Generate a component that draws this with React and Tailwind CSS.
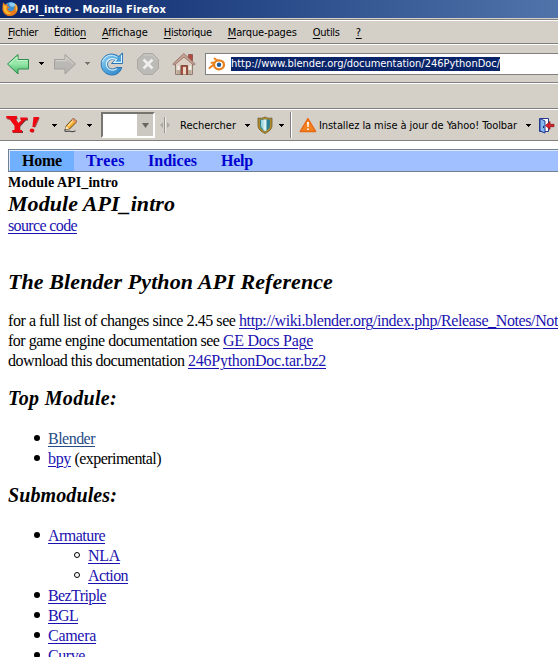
import { useLayoutEffect, useRef, useState } from 'react';

// Text spread over a fixed width by adjusting its letter spacing.
function Fit({ w, className = '', children }) {
  const ref = useRef(null);
  const [spacing, setSpacing] = useState(0);
  useLayoutEffect(() => {
    const el = ref.current;
    const natural = el.getBoundingClientRect().width;
    setSpacing((w - natural) / el.textContent.length);
  }, [w]);
  return (
    <span ref={ref} className={`inline-block whitespace-pre ${className}`} style={{ letterSpacing: spacing }}>
      {children}
    </span>
  );
}

function Link({ w, children, color = 'text-[#1a12b0]' }) {
  return (
    <a className={color}>
      <Fit w={w} className="underline decoration-1 underline-offset-2">{children}</Fit>
    </a>
  );
}

function Caret({ className = '', color = '#000' }) {
  return (
    <svg width="5" height="3" viewBox="0 0 5 3" shapeRendering="crispEdges" className={`shrink-0 ${className}`}>
      <path d="M0 0h5v1h-1v1h-1v1h-1v-1h-1v-1h-1z" fill={color} />
    </svg>
  );
}

function FirefoxIcon() {
  return (
    <svg width="16" height="16" viewBox="0 0 16 16" className="shrink-0">
      <circle cx="8.5" cy="7.3" r="6.3" fill="#3f8fd0" />
      <path d="M7 2c3-1.4 6-.2 7 2l-3 2-3-1z" fill="#8fd0f0" />
      <path d="M1 1.2 3 3.6 6 3.2 5 5l2.6 1.2-2 1.5c.4 2 2.2 3 4.2 2.3 2.6-.6 3-3 2.6-5l1 .6-.2-3C15.600 4 16.300 7 15.300 10c-1.500 4-5 5.500-8.300 5C2.500 14.400.300 11 .400 7z" fill="#e8791a" />
      <path d="M1.600 3 3 4.800l2 .4-1 2C4.500 10.500 7 12.500 10 12 6.500 14.500 2.500 12 1.600 8.500z" fill="#f8c030" />
      <path d="M13.300 2.600c2 2.400 2.300 6 .7 8.300l-.3-4z" fill="#f8cf48" />
    </svg>
  );
}

function Arrow({ forward }) {
  const id = forward ? 'arrowFwd' : 'arrowBack';
  return (
    <svg width="24" height="24" viewBox="0 0 24 24" className={`shrink-0 ${forward ? '-scale-x-100' : ''}`}>
      <defs>
        <linearGradient id={id} x1="0" y1="0" x2="0" y2="1">
          <stop offset="0" stopColor={forward ? '#c8c6c2' : '#7fda94'} />
          <stop offset=".45" stopColor={forward ? '#bbb9b5' : '#9be9ac'} />
          <stop offset="1" stopColor={forward ? '#b5b3af' : '#3fb663'} />
        </linearGradient>
      </defs>
      <path d="M1.500 12 12 2.500V7.500H22.500V17H12V22z" fill={`url(#${id})`} stroke={forward ? '#a3a19d' : '#2f8c4c'} strokeLinejoin="round" />
      <path d="M3.500 12 11 5V8.600H21.300" fill="none" stroke={forward ? '#d6d4d0' : '#c9f7d2'} strokeWidth="1" />
    </svg>
  );
}

function ReloadIcon() {
  return (
    <svg width="24" height="24" viewBox="0 0 24 24" className="shrink-0">
      <defs>
        <linearGradient id="reload" x1="0" y1="0" x2="1" y2="1">
          <stop offset="0" stopColor="#a8dcf5" />
          <stop offset=".5" stopColor="#4da5dc" />
          <stop offset="1" stopColor="#2f83c5" />
        </linearGradient>
      </defs>
      <path d="M22.500 1v10.500h-11l3.500-3.600c-3.600-1.700-7.500.6-7.500 4.300 0 4.600 5.500 6.300 8.800 3.300h5.500C20 20.800 16.500 23 12 23 6 23 1.200 18.300 1.200 12.200 1.200 3.500 11-1 18.700 4.500z" fill="url(#reload)" stroke="#2b75b5" strokeLinejoin="round" />
      <path d="M21.500 3v7.400h-7.600l2.500-2.800C10.500 5 6.200 8 6.400 12.600c.3 5.400 6.600 7 10.600 4" fill="none" stroke="#e0f4ff" strokeWidth="1.100" />
      <path d="M2.500 10c1.500-6 8.500-9 15-4.500" fill="none" stroke="#c6eafb" />
    </svg>
  );
}

function StopIcon() {
  return (
    <svg width="24" height="24" viewBox="0 0 24 24" className="shrink-0">
      <path d="M7.500 1.500h9l6 6v9l-6 6h-9l-6-6v-9z" fill="#bcbab6" stroke="#a9a7a3" strokeLinejoin="round" />
      <path d="M8 3h8l4.800 4.800" fill="none" stroke="#cfcdc9" />
      <path d="m7.500 7.500 9 9m0-9-9 9" stroke="#efeeec" strokeWidth="2.800" />
    </svg>
  );
}

function HomeIcon() {
  return (
    <svg width="24" height="24" viewBox="0 0 24 24" className="shrink-0">
      <path d="M16.500 2.500h4v6h-4z" fill="#b14a42" stroke="#8b4c45" strokeWidth=".8" />
      <path d="M3.500 11 12 3.500 20.500 11v11.500h-17z" fill="#ddd0c3" stroke="#937d70" />
      <path d="M4.500 18h15v4h-15z" fill="#bda998" />
      <path d="M9 13.500h6.500v9H9z" fill="#a84c38" stroke="#805044" />
      <path d="M11 15h3v7.500h-3z" fill="#e8d8c8" />
      <path d="M5.500 14h2v4h-2zM17 14h2v4h-2z" fill="#f5eee6" />
      <path d="M.8 12 11.800 1.500 23.200 12l-1.700 1L12 5 2.400 13z" fill="#c7a395" stroke="#8f6c62" strokeWidth=".8" strokeLinejoin="round" />
    </svg>
  );
}

function BlenderIcon() {
  return (
    <svg width="18" height="16" viewBox="0 0 18 16" className="shrink-0">
      <path d="M1.500 12 8 6.700H3.500M6.500 2.500 13 7" fill="none" stroke="#e8811c" strokeWidth="2" strokeLinecap="round" />
      <ellipse cx="11" cy="8.800" rx="5" ry="4.500" fill="#fff" stroke="#e8811c" strokeWidth="2.300" />
      <circle cx="11" cy="8.800" r="2.200" fill="#1d5898" />
    </svg>
  );
}

function YahooIcon() {
  return (
    <svg width="34" height="20" viewBox="0 0 34 20" className="shrink-0">
      <path d="M1.500 2.500H11.500V4.500H9.800L13 9.200 17 5.500H15V3.500H22V5.500H20L14.300 11.500V16H17V18H7V16H9.700V11.500L4.500 4.500H1.500z" fill="#5e4040" />
      <path d="M.3 1H11V3.500H9.300L12.300 8 16 4.700H14.300V2.500H21.500V4.700H19.300L14 10.700V15H16V17.500H6.300V15H8.500V10.700L3 3.500H.3z" fill="#ef0610" />
      <path d="M27.500 2h5.800L28.800 12h-2.400z" fill="#ef0610" />
      <ellipse cx="26" cy="15.500" rx="2.300" ry="1.900" fill="#ef0610" />
      <path d="M33.200 3 29.200 12h-1.200M28.200 16.300l-1.600 1.300" stroke="#7c3535" strokeWidth=".8" fill="none" />
    </svg>
  );
}

function PencilIcon() {
  return (
    <svg width="15" height="16" viewBox="0 0 15 16" className="shrink-0">
      <path d="M1 12v2c2 1.300 3-.5 5 .3s3 .8 5.500-.5" fill="none" stroke="#4b4b4b" strokeWidth="1.200" />
      <path d="M1.500 12.500 2.300 8.700 9.300 1.300 13 4.500 5.800 11.700z" fill="#f5ac2f" stroke="#65451b" strokeLinejoin="round" />
      <path d="m3.500 8.500 6-6.200 1 .8-6 6.400z" fill="#ffe69a" />
      <path d="m9.300 1.500 3.500 3-1.500 1.300-3.300-3z" fill="#e88d70" />
      <path d="M1.500 12.500 2.200 9.300 5 11.500z" fill="#fff3cc" />
    </svg>
  );
}

function ShieldIcon() {
  return (
    <svg width="16" height="18" viewBox="0 0 16 18" className="shrink-0">
      <path d="M1 2c3 .6 4.500.2 7-1 2.500 1.200 4 1.600 7 1v7.500c0 3.500-3 6-7 8-4-2-7-4.500-7-8z" fill="#b48a2a" stroke="#6b5a2c" strokeWidth=".8" />
      <path d="M3 3.500h10v6c0 2.500-2 4.500-5 6-3-1.500-5-3.500-5-6z" fill="#2c8293" />
      <path d="M4 4h4v10.500c-2.400-1.400-4-3-4-5z" fill="#9ed6df" />
      <path d="M6.500 3.500h3v11L8 15l-1.500-.8z" fill="#d9f1f2" />
    </svg>
  );
}

function WarningIcon() {
  return (
    <svg width="18" height="16" viewBox="0 0 18 16" className="shrink-0">
      <path d="M8.900 1.500 16.700 14.500H1.200z" fill="#f58220" stroke="#e86812" strokeWidth="1.400" strokeLinejoin="round" />
      <path d="M8 5h2l-.4 5H8.400zM8.200 11.500h1.700V13H8.200z" fill="#fff" />
    </svg>
  );
}

function ExitIcon() {
  return (
    <svg width="18" height="17" viewBox="0 0 18 17" className="shrink-0">
      <path d="M1.500 1.500h9v13h-9z" fill="#fff" stroke="#273b8c" />
      <path d="m2 1.500 5 2.500v12l-5-2z" fill="#86b8ef" stroke="#22398e" />
      <path d="M5 9h1v2H5z" fill="#15276c" />
      <path d="m7.500 8.500 4.500-4v2.800h4v2.400h-4v2.800z" fill="#d8202a" stroke="#8c1118" strokeWidth=".7" />
    </svg>
  );
}

function GripIcon() {
  return (
    <svg width="10" height="18" viewBox="0 0 10 18" className="shrink-0">
      <path d="M4 1h1v16H4z" fill="#96948f" />
      <path d="M5 1h1v16H5z" fill="#efede8" />
      <path d="M3 6v6L0 9zM7 6v6l3-3z" fill="#aaa8a3" />
    </svg>
  );
}

const menus = [
  ['F', 'ichier', '', 30],
  ['', 'Éditio', 'n', 32],
  ['A', 'ffichage', '', 46],
  ['H', 'istorique', '', 48],
  ['M', 'arque-pages', '', 69],
  ['O', 'utils', '', 27],
  ['?', '', '', 6],
];

function MenuBar() {
  return (
    <div className="flex h-6 items-center gap-4 border-t border-b border-t-white border-b-[#808080] pt-[2px] pl-2">
      {menus.map(([first, middle, last, w]) => (
        <Fit key={first + middle} w={w}>
          <u className="underline-offset-2">{first}</u>
          {middle}
          <u className="underline-offset-2">{last}</u>
        </Fit>
      ))}
    </div>
  );
}

function NavBar() {
  return (
    <div className="flex h-[39px] items-center border-t border-b border-t-white border-b-[#808080] pl-[6px]">
      <Arrow />
      <Caret className="ml-[9px]" />
      <div className="ml-[9px] flex"><Arrow forward /></div>
      <Caret className="ml-2" color="#77756f" />
      <div className="ml-[10px] flex"><ReloadIcon /></div>
      <div className="ml-3 flex"><StopIcon /></div>
      <div className="ml-3 flex"><HomeIcon /></div>
      <div className="ml-[9px] flex h-[22px] flex-1 items-center border border-r-0 border-[#808080] bg-white pl-[2px]">
        <BlenderIcon />
        <div className="ml-[5px] flex h-[14px] items-center bg-[#0a246a] pt-px text-white">
          <Fit w={269}>http://www.blender.org/documentation/246PythonDoc/</Fit>
        </div>
      </div>
    </div>
  );
}

function YahooBar() {
  return (
    <div className="flex h-8 items-center overflow-hidden border-t border-b border-t-white border-b-[#808080] pl-[6px]">
      <YahooIcon />
      <Caret className="ml-3" />
      <div className="ml-[7px] flex"><PencilIcon /></div>
      <Caret className="ml-2" />
      <div className="ml-[9px] flex h-[26px] w-[54px] shrink-0 border-2 border-t-[#77756f] border-r-white border-b-white border-l-[#77756f] bg-white">
        <div className="flex-1" />
        <div className="flex w-4 items-center justify-center bg-[#cac8c1]">
          <svg width="7" height="5" viewBox="0 0 7 5"><path d="M0 0h7L3.500 5z" fill="#67655f" /></svg>
        </div>
      </div>
      <div className="ml-[5px] flex"><GripIcon /></div>
      <div className="ml-[10px] flex pt-[2px]"><Fit w={56}>Rechercher</Fit></div>
      <Caret className="ml-[9px]" />
      <div className="ml-[7px] flex"><ShieldIcon /></div>
      <Caret className="ml-[6px]" />
      <div className="ml-[6px] h-[26px] w-[2px] shrink-0 border-r border-l border-l-[#808080] border-r-white" />
      <div className="ml-[7px] flex"><WarningIcon /></div>
      <div className="ml-[2px] flex pt-[2px]"><Fit w={198}>Installez la mise à jour de Yahoo! Toolbar</Fit></div>
      <Caret className="ml-[9px]" />
      <div className="ml-[7px] flex"><ExitIcon /></div>
    </div>
  );
}

function Item({ children, hollow }) {
  return (
    <li className="flex h-5 items-center">
      <span className={hollow ? 'mr-2 ml-[74px] size-[6px] rounded-full border border-black' : 'mr-2 ml-[34px] size-[6px] rounded-full bg-black'} />
      <span className="pt-[2px]">{children}</span>
    </li>
  );
}

function Page() {
  return (
    <main className="h-[516px] overflow-hidden bg-white pt-2 pl-2 font-['Liberation_Serif',serif] text-[16px] leading-5 whitespace-nowrap text-black">
      <nav className="flex h-[23px] items-stretch border border-r-0 border-[#708090] bg-[#a0c0ff] pt-px pl-px text-[16px] font-bold text-[#0000d0] shadow-[inset_1px_1px_0_#dfe9ff]">
        <span className="w-16 bg-[#70b0ff] pl-3 text-black"><Fit w={40}>Home</Fit></span>
        <span className="ml-3"><Fit w={39}>Trees</Fit></span>
        <span className="ml-[23px]"><Fit w={49}>Indices</Fit></span>
        <span className="ml-6"><Fit w={32}>Help</Fit></span>
      </nav>
      <div className="h-5 text-[14px] leading-[22px] font-bold"><Fit w={110}>Module API_intro</Fit></div>
      <h1 className="h-[23px] text-[22px] leading-[23px] font-bold italic"><Fit w={167}>Module API_intro</Fit></h1>
      <div className="h-5 leading-[22px]"><Link w={69}>source code</Link></div>
      <h1 className="mt-[35px] h-6 text-[22px] leading-6 font-bold italic"><Fit w={325}>The Blender Python API Reference</Fit></h1>
      <div className="mt-4 leading-[22px]">
        <p className="h-5"><Fit w={231}>{'for a full list of changes since 2.45 see '}</Fit><Link w={319}>http://wiki.blender.org/index.php/Release_Notes/Not</Link></p>
        <p className="h-5"><Fit w={215}>{'for game engine documentation see '}</Fit><Link w={90}>GE Docs Page</Link></p>
        <p className="h-5"><Fit w={180}>{'download this documentation '}</Fit><Link w={138}>246PythonDoc.tar.bz2</Link></p>
      </div>
      <h2 className="mt-4 h-6 text-[20px] leading-6 font-bold italic"><Fit w={109}>Top Module:</Fit></h2>
      <ul className="-ml-2 mt-[18px]">
        <Item><Link w={47} color="text-[#264b86]">Blender</Link></Item>
        <Item><Link w={23}>bpy</Link><Fit w={90}>{' (experimental)'}</Fit></Item>
      </ul>
      <h2 className="mt-[15px] h-6 text-[20px] leading-6 font-bold italic"><Fit w={109}>Submodules:</Fit></h2>
      <ul className="-ml-2 mt-[18px]">
        <Item><Link w={57}>Armature</Link></Item>
        <Item hollow><Link w={32}>NLA</Link></Item>
        <Item hollow><Link w={40}>Action</Link></Item>
        <Item><Link w={58}>BezTriple</Link></Item>
        <Item><Link w={30}>BGL</Link></Item>
        <Item><Link w={48}>Camera</Link></Item>
        <Item><Link w={37}>Curve</Link></Item>
      </ul>
    </main>
  );
}

export default function App() {
  return (
    <div className="h-[657px] w-[558px] overflow-hidden bg-[#d4d0c8] font-['DejaVu_Sans_Condensed','DejaVu_Sans',sans-serif] text-[11px] leading-[14px] whitespace-nowrap text-black">
      <header className="flex h-[18px] items-center bg-linear-to-r from-[#0a246a] to-[#5074aa] pl-[2px] font-bold text-white">
        <FirefoxIcon />
        <span className="ml-[2px] flex pt-[2px]"><Fit w={146}>API_intro - Mozilla Firefox</Fit></span>
      </header>
      <div className="h-[2px] border-b border-[#808080]" />
      <MenuBar />
      <NavBar />
      <div className="h-[26px] border-t border-b border-t-white border-b-[#808080]" />
      <YahooBar />
      <Page />
    </div>
  );
}
